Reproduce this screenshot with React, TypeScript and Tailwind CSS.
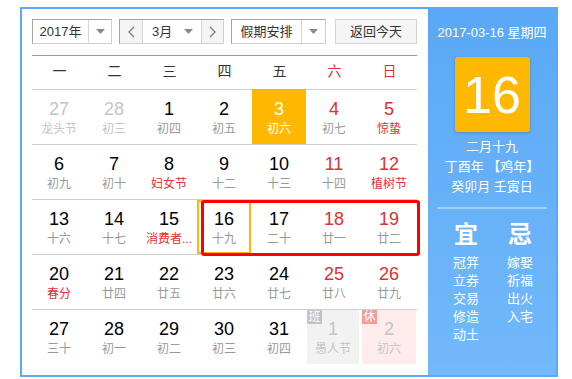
import React from "react"

type Day = {
  n: number
  l: string
  kind?: "prev" | "next"
  red?: boolean
  redL?: boolean
  today?: boolean
  sel?: boolean
  badge?: "班" | "休"
}

const rows: Day[][] = [
  [
    { n: 27, l: "龙头节", kind: "prev" },
    { n: 28, l: "初三", kind: "prev" },
    { n: 1, l: "初四" },
    { n: 2, l: "初五" },
    { n: 3, l: "初六", today: true },
    { n: 4, l: "初七", red: true },
    { n: 5, l: "惊蛰", red: true, redL: true },
  ],
  [
    { n: 6, l: "初九" },
    { n: 7, l: "初十" },
    { n: 8, l: "妇女节", redL: true },
    { n: 9, l: "十二" },
    { n: 10, l: "十三" },
    { n: 11, l: "十四", red: true },
    { n: 12, l: "植树节", red: true, redL: true },
  ],
  [
    { n: 13, l: "十六" },
    { n: 14, l: "十七" },
    { n: 15, l: "消费者...", redL: true },
    { n: 16, l: "十九", sel: true },
    { n: 17, l: "二十" },
    { n: 18, l: "廿一", red: true },
    { n: 19, l: "廿二", red: true },
  ],
  [
    { n: 20, l: "春分", redL: true },
    { n: 21, l: "廿四" },
    { n: 22, l: "廿五" },
    { n: 23, l: "廿六" },
    { n: 24, l: "廿七" },
    { n: 25, l: "廿八", red: true },
    { n: 26, l: "廿九", red: true },
  ],
  [
    { n: 27, l: "三十" },
    { n: 28, l: "初一" },
    { n: 29, l: "初二" },
    { n: 30, l: "初三" },
    { n: 31, l: "初四" },
    { n: 1, l: "愚人节", kind: "next", badge: "班" },
    { n: 2, l: "初六", kind: "next", badge: "休" },
  ],
]

const weekdays = ["一", "二", "三", "四", "五", "六", "日"]

function Caret() {
  return (
    <svg width="9" height="5" viewBox="0 0 9 5">
      <path d="M0 0h9L4.5 5z" fill="#8a8a8a" />
    </svg>
  )
}

function Chevron({ dir }: { dir: "l" | "r" }) {
  return (
    <svg width="7" height="12" viewBox="0 0 7 12">
      <path
        d={dir === "l" ? "M6 1L1 6l5 5" : "M1 1l5 5-5 5"}
        fill="none"
        stroke="#777"
        strokeWidth="1.2"
      />
    </svg>
  )
}

function Cell({ d }: { d: Day }) {
  let num = "text-black"
  let lun = "text-[#999]"
  if (d.kind) {
    num = "text-[#c4c4c4]"
    lun = "text-[#c4c4c4]"
  }
  if (d.red) num = "text-[#e12f33]"
  if (d.redL) lun = "text-[#e12f33]"
  if (d.today) {
    num = "text-white"
    lun = "text-white"
  }

  let box = "mr-[1px] h-[54px]"
  if (d.today) box = "mr-[1px] h-[55px] bg-[#ffb800] -mt-[1px] pt-[1px]"
  if (d.badge === "班") box = "mr-[3px] h-[54px] bg-[#f2f2f2]"
  if (d.badge === "休") box = "mr-[1px] h-[54px] bg-[#fdeceb]"

  return (
    <div className={`relative flex flex-col items-center overflow-hidden ${box}`}>
      {d.badge && (
        <span
          className={`absolute left-0 top-0 flex h-[14px] w-[15px] items-center justify-center text-[12px] leading-none text-white ${
            d.badge === "班" ? "bg-[#c2c2c2]" : "bg-[#f49c98]"
          }`}
        >
          {d.badge}
        </span>
      )}
      {d.sel && (
        <span className="absolute left-0 top-0 h-[54px] w-[54px] border-2 border-[#ffb800]" />
      )}
      <div className="pt-[9px]">
        <div className={`text-center text-[18px] leading-[20px] ${num}`}>{d.n}</div>
        <div className={`mt-[1px] whitespace-nowrap text-center text-[12px] leading-[18px] ${lun}`}>
          {d.l}
        </div>
      </div>
    </div>
  )
}

export default function App() {
  return (
    <div className="min-h-screen bg-white pl-[20px] pt-[7px] font-['Liberation_Sans','Noto_Sans_CJK_SC',sans-serif]">
      <div className="flex h-[370px] w-[538px] border-2 border-[#5ca9f6]">
        {/* left side */}
        <div className="flex w-[406px] flex-col pl-[10px] pr-[11px] pt-[10px]">
          <div className="flex h-[25px] text-[13px] text-[#333]">
            <div className="flex w-[80px] border border-[#cfcfcf] border-l-[#a5a5a5] border-t-[#a5a5a5]">
              <div className="flex w-[55px] items-center justify-center">2017年</div>
              <div className="flex flex-1 items-center justify-center border-l border-[#d6d6d6]">
                <Caret />
              </div>
            </div>
            <div className="ml-[7px] flex w-[105px] border border-[#cfcfcf] border-l-[#a5a5a5] border-t-[#a5a5a5]">
              <div className="flex w-[22px] items-center justify-center bg-[#f5f5f5]">
                <Chevron dir="l" />
              </div>
              <div className="flex w-[60px] items-center border-x border-[#d6d6d6] pl-[9px]">
                <span>3月</span>
                <span className="ml-auto mr-[8px] flex">
                  <Caret />
                </span>
              </div>
              <div className="flex flex-1 items-center justify-center bg-[#f5f5f5]">
                <Chevron dir="r" />
              </div>
            </div>
            <div className="ml-[7px] flex w-[95px] border border-[#cfcfcf] border-l-[#a5a5a5] border-t-[#a5a5a5]">
              <div className="flex w-[69px] items-center justify-center">假期安排</div>
              <div className="flex flex-1 items-center justify-center border-l border-[#d6d6d6]">
                <Caret />
              </div>
            </div>
            <div className="ml-[9px] flex w-[82px] items-center justify-center border border-[#d4d4d4] bg-[#f5f5f5]">
              返回今天
            </div>
          </div>

          <div className="mt-[11px] h-[1px] bg-[#5ca9f6]" />

          <div className="grid h-[34px] grid-cols-7 border-b border-[#cfcfcf] pb-[3px] text-[14px]">
            {weekdays.map((w, i) => (
              <div
                key={w}
                className={`flex items-center justify-center ${i > 4 ? "text-[#e12f33]" : "text-[#333]"}`}
              >
                {w}
              </div>
            ))}
          </div>

          {rows.map((r, i) => (
            <div
              key={i}
              className={`relative grid h-[55px] grid-cols-7 items-start ${i < 4 ? "border-b border-[#cfcfcf]" : ""}`}
            >
              {r.map((d, j) => (
                <Cell key={j} d={d} />
              ))}
              {i === 2 && (
                <div className="absolute left-[169px] top-0 h-[56px] w-[219px] rounded-[3px] border-[3px] border-[#ff0000]" />
              )}
            </div>
          ))}
        </div>

        {/* right panel */}
        <div className="flex flex-1 flex-col items-center bg-gradient-to-b from-[#5aa8f6] to-[#72b9fb] pt-[14px] text-white">
          <div className="text-[13px] leading-[20px]">2017-03-16 星期四</div>
          <div className="mt-[14px] flex h-[75px] w-[75px] items-center justify-center rounded-[3px] bg-[#ffb800] shadow-[0_1px_3px_rgba(0,0,0,0.2)]">
            <span className="text-[52px] leading-none">16</span>
          </div>
          <div className="mt-[5px] flex flex-col items-center text-[13px] leading-[20px]">
            <div>二月十九</div>
            <div>丁酉年 【鸡年】</div>
            <div>癸卯月 壬寅日</div>
          </div>
          <div className="mt-[10px] h-[2px] w-[110px] bg-[#a3cff9]" />
          <div className="mt-[12px] grid w-[110px] grid-cols-2 pl-[2px]">
            <div className="flex flex-col items-center">
              <div className="text-[24px] font-bold leading-[28px]">宜</div>
              <div className="mt-[5px] flex flex-col items-center text-[13px] leading-[18px]">
                <div>冠笄</div>
                <div>立券</div>
                <div>交易</div>
                <div>修造</div>
                <div>动土</div>
              </div>
            </div>
            <div className="flex flex-col items-center">
              <div className="text-[24px] font-bold leading-[28px]">忌</div>
              <div className="mt-[5px] flex flex-col items-center text-[13px] leading-[18px]">
                <div>嫁娶</div>
                <div>祈福</div>
                <div>出火</div>
                <div>入宅</div>
              </div>
            </div>
          </div>
        </div>
      </div>
    </div>
  )
}
